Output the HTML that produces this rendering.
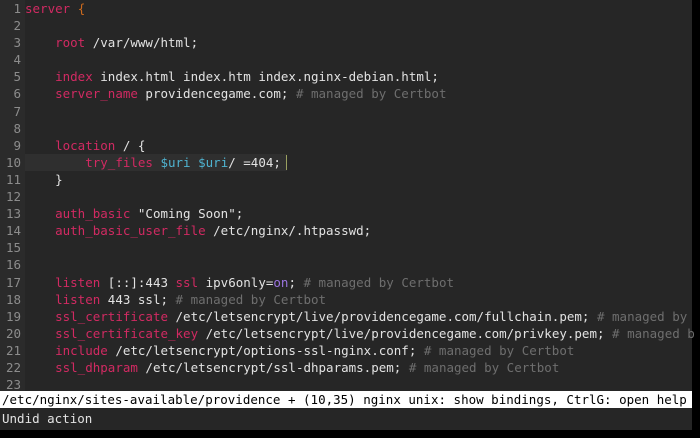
<!DOCTYPE html>
<html><head><style>
html,body{margin:0;padding:0;background:#000;width:700px;height:438px;overflow:hidden}
#w{position:absolute;left:0;top:0;width:692px;height:430px;background:#262626}
#ed{position:absolute;left:0;top:0;width:692px;font:12.5px/17.1px "DejaVu Sans Mono","Liberation Mono",monospace;color:#e2e2e2}
.l{height:17.1px;white-space:pre;position:relative}
.n{display:inline-block;width:21px;text-align:right;color:#8c8c8c;background:#2b2b2b;padding-right:4px}
.k{color:#d12a62}.v{color:#4fb3d0}.c{color:#6e6e6e}.o{color:#cc6a1e}.p{color:#9b74e0}
.cur{position:absolute;left:25px;top:0;width:262px;height:17px;background:#2f2f2f}
.caret{position:absolute;left:286px;top:1px;width:1px;height:15px;background:#9aa060}
#st{position:absolute;left:0;top:391px;width:692px;height:17px;background:#fff;color:#000;font:12.5px/17px "DejaVu Sans Mono",monospace;white-space:pre;padding-left:2px;box-sizing:border-box}
#msg{position:absolute;left:0;top:409px;font:12.5px/19px "DejaVu Sans Mono",monospace;color:#e2e2e2;white-space:pre;padding-left:2px}
</style></head><body><div id="w">
<div id="ed">
<div class="l"><span class="n">1</span><span class="k">server</span> <span class="o">{</span></div>
<div class="l"><span class="n">2</span></div>
<div class="l"><span class="n">3</span>    <span class="k">root</span> /var/www/html;</div>
<div class="l"><span class="n">4</span></div>
<div class="l"><span class="n">5</span>    <span class="k">index</span> index.html index.htm index.nginx-debian.html;</div>
<div class="l"><span class="n">6</span>    <span class="k">server_name</span> providencegame.com; <span class="c"># managed by Certbot</span></div>
<div class="l"><span class="n">7</span></div>
<div class="l"><span class="n">8</span></div>
<div class="l"><span class="n">9</span>    <span class="k">location</span> / {</div>
<div class="l"><div class="cur"></div><div class="caret"></div><span class="n" style="position:relative">10</span><span style="position:relative">        <span class="k">try_files</span> <span class="v">$uri</span> <span class="v">$uri</span>/ =404;</span></div>
<div class="l"><span class="n">11</span>    }</div>
<div class="l"><span class="n">12</span></div>
<div class="l"><span class="n">13</span>    <span class="k">auth_basic</span> "Coming Soon";</div>
<div class="l"><span class="n">14</span>    <span class="k">auth_basic_user_file</span> /etc/nginx/.htpasswd;</div>
<div class="l"><span class="n">15</span></div>
<div class="l"><span class="n">16</span></div>
<div class="l"><span class="n">17</span>    <span class="k">listen</span> [::]:443 <span class="k">ssl</span> ipv6only=<span class="p">on</span>; <span class="c"># managed by Certbot</span></div>
<div class="l"><span class="n">18</span>    <span class="k">listen</span> 443 ssl; <span class="c"># managed by Certbot</span></div>
<div class="l"><span class="n">19</span>    <span class="k">ssl_certificate</span> /etc/letsencrypt/live/providencegame.com/fullchain.pem; <span class="c"># managed by</span></div>
<div class="l"><span class="n">20</span>    <span class="k">ssl_certificate_key</span> /etc/letsencrypt/live/providencegame.com/privkey.pem; <span class="c"># managed b</span></div>
<div class="l"><span class="n">21</span>    <span class="k">include</span> /etc/letsencrypt/options-ssl-nginx.conf; <span class="c"># managed by Certbot</span></div>
<div class="l"><span class="n">22</span>    <span class="k">ssl_dhparam</span> /etc/letsencrypt/ssl-dhparams.pem; <span class="c"># managed by Certbot</span></div>
<div class="l"><span class="n">23</span></div>
</div>
<div id="st">/etc/nginx/sites-available/providence + (10,35) nginx unix: show bindings, CtrlG: open help</div>
<div id="msg">Undid action</div>
</div></body></html>
